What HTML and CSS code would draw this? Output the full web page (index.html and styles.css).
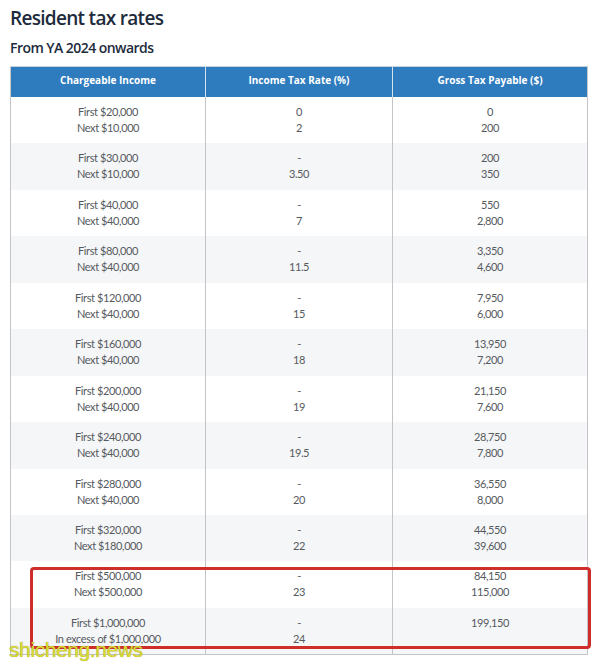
FILE: index.html
```html
<!DOCTYPE html>
<html>
<head>
<meta charset="utf-8">
<link rel="stylesheet" href="styles.css">
</head>
<body>
<div class="page">
  <h1 class="title">Resident tax rates</h1>
  <h2 class="subtitle">From YA 2024 onwards</h2>
  <div class="table-wrap">
    <table class="rates">
      <colgroup><col class="c1"><col class="c2"><col class="c3"></colgroup>
      <thead>
        <tr><th>Chargeable Income</th><th>Income Tax Rate (%)</th><th>Gross Tax Payable ($)</th></tr>
      </thead>
      <tbody>
        <tr><td>First $20,000<br>Next $10,000</td><td>0<br>2</td><td>0<br>200</td></tr>
        <tr><td>First $30,000<br>Next $10,000</td><td>-<br>3.50</td><td>200<br>350</td></tr>
        <tr><td>First $40,000<br>Next $40,000</td><td>-<br>7</td><td>550<br>2,800</td></tr>
        <tr><td>First $80,000<br>Next $40,000</td><td>-<br>11.5</td><td>3,350<br>4,600</td></tr>
        <tr><td>First $120,000<br>Next $40,000</td><td>-<br>15</td><td>7,950<br>6,000</td></tr>
        <tr><td>First $160,000<br>Next $40,000</td><td>-<br>18</td><td>13,950<br>7,200</td></tr>
        <tr><td>First $200,000<br>Next $40,000</td><td>-<br>19</td><td>21,150<br>7,600</td></tr>
        <tr><td>First $240,000<br>Next $40,000</td><td>-<br>19.5</td><td>28,750<br>7,800</td></tr>
        <tr><td>First $280,000<br>Next $40,000</td><td>-<br>20</td><td>36,550<br>8,000</td></tr>
        <tr><td>First $320,000<br>Next $180,000</td><td>-<br>22</td><td>44,550<br>39,600</td></tr>
        <tr><td>First $500,000<br>Next $500,000</td><td>-<br>23</td><td>84,150<br>115,000</td></tr>
        <tr><td>First $1,000,000<br>In excess of $1,000,000</td><td>-<br>24</td><td>199,150<br>&nbsp;</td></tr>
      </tbody>
    </table>
    <div class="highlight"></div>
  </div>
  <div class="watermark">shicheng.news</div>
</div>
</body>
</html>
```
FILE: styles.css
```css
html, body {
  margin: 0;
  padding: 0;
  background: #ffffff;
}
.page {
  position: relative;
  width: 596px;
  height: 666px;
  overflow: hidden;
  padding: 0 10px;
  box-sizing: border-box;
  font-family: "Open Sans", "Noto Sans", sans-serif;
}
.title {
  margin: 0;
  padding-top: 4px;
  height: 32px;
  font-size: 19px;
  font-weight: 600;
  color: #1d2b3c;
  line-height: 28px;
  letter-spacing: -0.7px;
}
.subtitle {
  margin: 0;
  height: 30px;
  font-size: 14px;
  font-weight: 600;
  color: #1d2b3c;
  line-height: 24px;
  letter-spacing: -0.55px;
}
.table-wrap {
  position: relative;
  width: 577px;
}
.rates {
  width: 577px;
  border-collapse: collapse;
  table-layout: fixed;
  font-family: Lato, "Open Sans", sans-serif;
  font-size: 11px;
  letter-spacing: -0.4px;
  color: #555a60;
}
.c1 { width: 195px; }
.c2 { width: 187px; }
.c3 { width: 195px; }
.rates th {
  background: #2e7bbe;
  color: #ffffff;
  font-family: "Open Sans", sans-serif;
  font-weight: 700;
  font-size: 10px;
  letter-spacing: 0;
  height: 26px;
  padding: 0 0 4px;
  border-top: 1px solid #c9d3dd;
  border-left: 1px solid #d6e3ef;
  text-align: center;
}
.rates th:first-child { border-left: 1px solid #c9c9c9; }
.rates th:last-child { border-right: 1px solid #c9c9c9; }
.rates td {
  text-align: center;
  vertical-align: top;
  height: 46.45px;
  box-sizing: border-box;
  padding: 7px 0 0;
  line-height: 16px;
  border-left: 1px solid #c4c4c8;
  border-right: 1px solid #c4c4c8;
}
.rates tbody tr:nth-child(even) td {
  background: #f5f6f8;
}
.rates tbody tr:last-child td {
  border-bottom: 1px solid #c4c4c8;
}
.highlight {
  position: absolute;
  left: 20px;
  top: 501px;
  width: 561px;
  height: 82px;
  box-sizing: border-box;
  border: 3px solid #cf2d2a;
  border-radius: 4px;
}
.watermark {
  position: absolute;
  left: 9px;
  top: 637px;
  font-family: "Liberation Sans", Arial, sans-serif;
  font-size: 21px;
  letter-spacing: -0.4px;
  color: #dada30;
  text-shadow: 0 0 1px #8a8a40;
  line-height: 26px;
}
```
